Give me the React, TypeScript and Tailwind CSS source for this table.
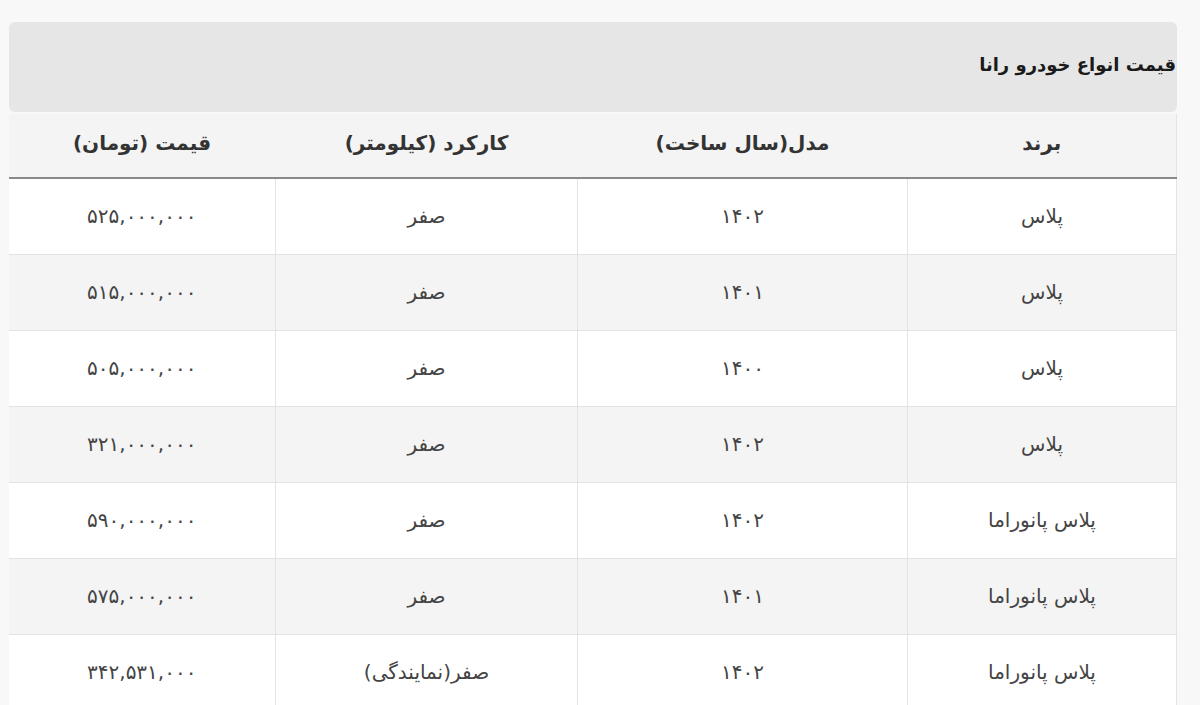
const ROWS: [string, string, string, string][] = [
  ["پلاس", "۱۴۰۲", "صفر", "۵۲۵,۰۰۰,۰۰۰"],
  ["پلاس", "۱۴۰۱", "صفر", "۵۱۵,۰۰۰,۰۰۰"],
  ["پلاس", "۱۴۰۰", "صفر", "۵۰۵,۰۰۰,۰۰۰"],
  ["پلاس", "۱۴۰۲", "صفر", "۳۲۱,۰۰۰,۰۰۰"],
  ["پلاس پانوراما", "۱۴۰۲", "صفر", "۵۹۰,۰۰۰,۰۰۰"],
  ["پلاس پانوراما", "۱۴۰۱", "صفر", "۵۷۵,۰۰۰,۰۰۰"],
  ["پلاس پانوراما", "۱۴۰۲", "صفر(نمایندگی)", "۳۴۲,۵۳۱,۰۰۰"],
];

const HEADS = ["برند", "مدل(سال ساخت)", "کارکرد (کیلومتر)", "قیمت (تومان)"];
const WIDTHS = ["w-[269px]", "w-[330px]", "w-[302px]", "w-[267px]"];

export default function App() {
  return (
    <div
      dir="rtl"
      className="min-h-[705px] bg-[#f8f8f8] pl-[9px] pr-[23px] pt-[22px] text-[#333] [font-family:'DejaVu_Sans',sans-serif]"
    >
      <div className="flex h-[90px] items-center rounded-md bg-[#e6e6e6] pr-[1px]">
        <h2 className="pb-[6px] text-[18px] font-bold text-[#1a1a1a]">قیمت انواع خودرو رانا</h2>
      </div>
      <table className="mt-[2px] w-full table-fixed border-collapse border-r border-[#e4e4e4]">
        <thead>
          <tr className="h-[64px] border-b-2 border-[#8a8a8a] bg-[#f4f4f4]">
            {HEADS.map((h, i) => (
              <th key={h} className={`${WIDTHS[i]} pb-[5px] text-center text-[20px] font-bold text-[#333]`}>
                {h}
              </th>
            ))}
          </tr>
        </thead>
        <tbody>
          {ROWS.map((row, r) => (
            <tr key={r} className={`h-[76px] border-b border-[#e3e3e3] ${r % 2 ? "bg-[#f4f4f4]" : "bg-white"}`}>
              {row.map((cell, c) => (
                <td
                  key={c}
                  className={`text-center text-[20px] text-[#444] ${c < 3 ? "border-l border-[#e3e3e3]" : ""}`}
                >
                  {cell}
                </td>
              ))}
            </tr>
          ))}
        </tbody>
      </table>
    </div>
  );
}
